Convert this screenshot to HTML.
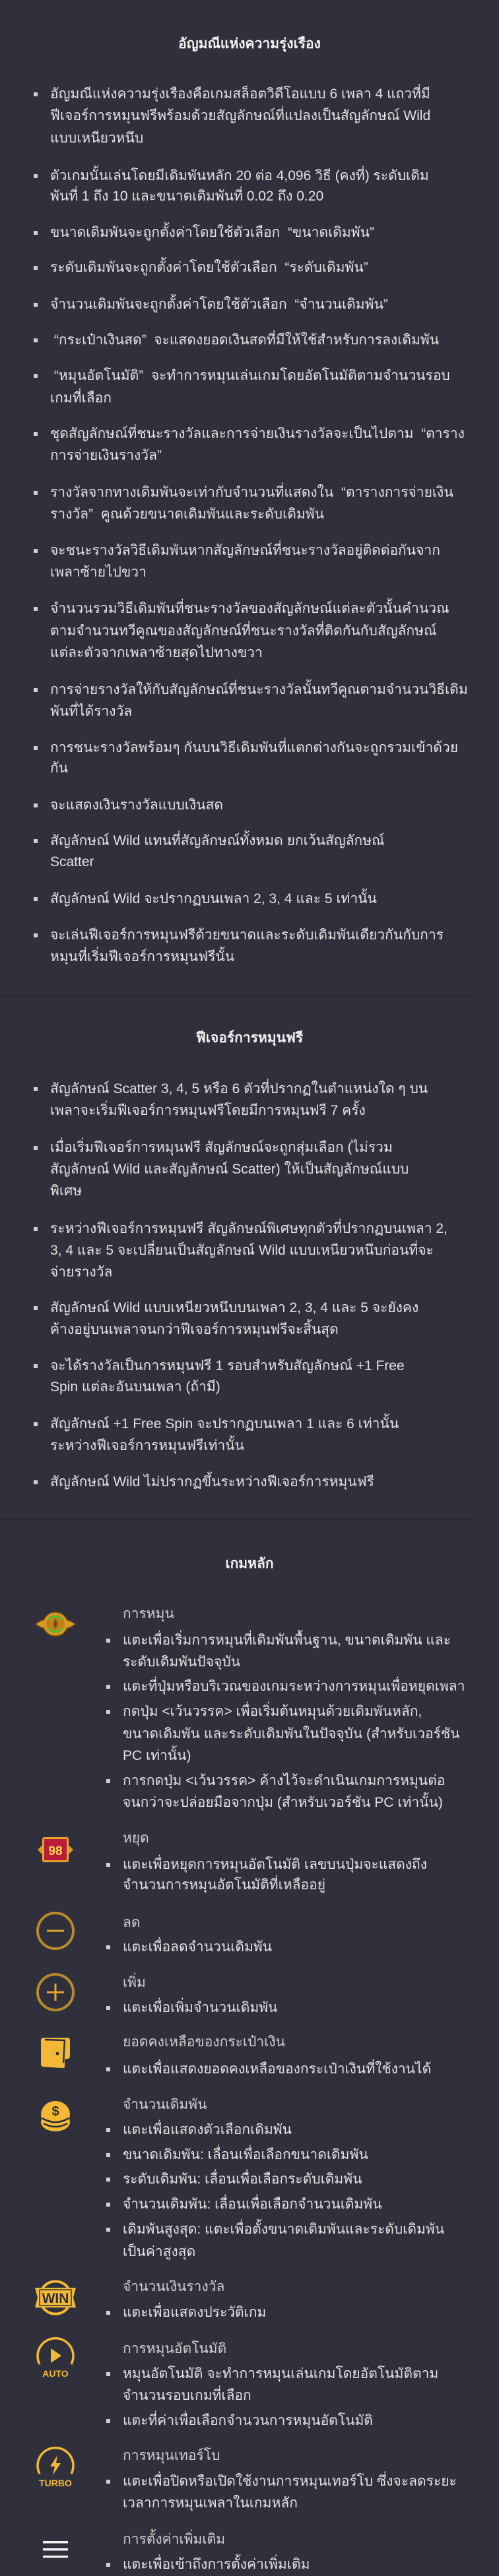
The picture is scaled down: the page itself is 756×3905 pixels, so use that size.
<!DOCTYPE html>
<html><head><meta charset="utf-8">
<style>
html,body{margin:0;padding:0;}
body{width:756px;height:3900px;background:#30303c;position:relative;overflow:hidden;font-family:"Liberation Sans","DejaVu Sans",sans-serif;}
.t{position:absolute;left:0;width:756px;text-align:center;color:#f2f2f2;font-weight:bold;font-size:21px;line-height:34px;height:34px;}
.l{position:absolute;left:76px;white-space:nowrap;color:#e2e2e2;font-size:21px;line-height:34px;height:34px;}
.s3{left:186px;}
.lab{color:#cfcfcf;}
.b::before{content:"";position:absolute;left:-25px;top:14px;width:6px;height:6px;background:#d0d0d0;}
.sep{position:absolute;left:0;width:723px;height:2px;background:#292933;}
.ic{position:absolute;}
.edge{position:absolute;right:0;top:0;width:2px;height:3900px;background:#3a3a46;}
</style></head><body>
<div class="edge"></div>

<div class="t" style="top:50px">อัญมณีแห่งความรุ่งเรือง</div>
<div class="l b" style="top:126px">อัญมณีแห่งความรุ่งเรืองคือเกมสล็อตวิดีโอแบบ 6 เพลา 4 แถวที่มี</div>
<div class="l" style="top:159px">ฟีเจอร์การหมุนฟรีพร้อมด้วยสัญลักษณ์ที่แปลงเป็นสัญลักษณ์ Wild</div>
<div class="l" style="top:193px">แบบเหนียวหนึบ</div>
<div class="l b" style="top:250px">ตัวเกมนั้นเล่นโดยมีเดิมพันหลัก 20 ต่อ 4,096 วิธี (คงที่) ระดับเดิม</div>
<div class="l" style="top:281px">พันที่ 1 ถึง 10 และขนาดเดิมพันที่ 0.02 ถึง 0.20</div>
<div class="l b" style="top:336px">ขนาดเดิมพันจะถูกตั้งค่าโดยใช้ตัวเลือก &nbsp;“ขนาดเดิมพัน”</div>
<div class="l b" style="top:389px">ระดับเดิมพันจะถูกตั้งค่าโดยใช้ตัวเลือก &nbsp;“ระดับเดิมพัน”</div>
<div class="l b" style="top:445px">จำนวนเดิมพันจะถูกตั้งค่าโดยใช้ตัวเลือก &nbsp;“จำนวนเดิมพัน”</div>
<div class="l b" style="top:499px">&nbsp;“กระเป๋าเงินสด” &nbsp;จะแสดงยอดเงินสดที่มีให้ใช้สำหรับการลงเดิมพัน</div>
<div class="l b" style="top:553px">&nbsp;“หมุนอัตโนมัติ” &nbsp;จะทำการหมุนเล่นเกมโดยอัตโนมัติตามจำนวนรอบ</div>
<div class="l" style="top:587px">เกมที่เลือก</div>
<div class="l b" style="top:641px">ชุดสัญลักษณ์ที่ชนะรางวัลและการจ่ายเงินรางวัลจะเป็นไปตาม &nbsp;“ตาราง</div>
<div class="l" style="top:674px">การจ่ายเงินรางวัล”</div>
<div class="l b" style="top:730px">รางวัลจากทางเดิมพันจะเท่ากับจำนวนที่แสดงใน &nbsp;“ตารางการจ่ายเงิน</div>
<div class="l" style="top:763px">รางวัล” &nbsp;คูณด้วยขนาดเดิมพันและระดับเดิมพัน</div>
<div class="l b" style="top:818px">จะชนะรางวัลวิธีเดิมพันหากสัญลักษณ์ที่ชนะรางวัลอยู่ติดต่อกันจาก</div>
<div class="l" style="top:851px">เพลาซ้ายไปขวา</div>
<div class="l b" style="top:906px">จำนวนรวมวิธีเดิมพันที่ชนะรางวัลของสัญลักษณ์แต่ละตัวนั้นคำนวณ</div>
<div class="l" style="top:940px">ตามจำนวนทวีคูณของสัญลักษณ์ที่ชนะรางวัลที่ติดกันกับสัญลักษณ์</div>
<div class="l" style="top:973px">แต่ละตัวจากเพลาซ้ายสุดไปทางขวา</div>
<div class="l b" style="top:1029px">การจ่ายรางวัลให้กับสัญลักษณ์ที่ชนะรางวัลนั้นทวีคูณตามจำนวนวิธีเดิม</div>
<div class="l" style="top:1062px">พันที่ได้รางวัล</div>
<div class="l b" style="top:1117px">การชนะรางวัลพร้อมๆ กันบนวิธีเดิมพันที่แตกต่างกันจะถูกรวมเข้าด้วย</div>
<div class="l" style="top:1148px">กัน</div>
<div class="l b" style="top:1204px">จะแสดงเงินรางวัลแบบเงินสด</div>
<div class="l b" style="top:1258px">สัญลักษณ์ Wild แทนที่สัญลักษณ์ทั้งหมด ยกเว้นสัญลักษณ์</div>
<div class="l" style="top:1290px">Scatter</div>
<div class="l b" style="top:1346px">สัญลักษณ์ Wild จะปรากฏบนเพลา 2, 3, 4 และ 5 เท่านั้น</div>
<div class="l b" style="top:1401px">จะเล่นฟีเจอร์การหมุนฟรีด้วยขนาดและระดับเดิมพันเดียวกันกับการ</div>
<div class="l" style="top:1434px">หมุนที่เริ่มฟีเจอร์การหมุนฟรีนั้น</div>

<div class="sep" style="top:1508px"></div>

<div class="t" style="top:1557px">ฟีเจอร์การหมุนฟรี</div>
<div class="l b" style="top:1634px">สัญลักษณ์ Scatter 3, 4, 5 หรือ 6 ตัวที่ปรากฏในตำแหน่งใด ๆ บน</div>
<div class="l" style="top:1667px">เพลาจะเริ่มฟีเจอร์การหมุนฟรีโดยมีการหมุนฟรี 7 ครั้ง</div>
<div class="l b" style="top:1723px">เมื่อเริ่มฟีเจอร์การหมุนฟรี สัญลักษณ์จะถูกสุ่มเลือก (ไม่รวม</div>
<div class="l" style="top:1756px">สัญลักษณ์ Wild และสัญลักษณ์ Scatter) ให้เป็นสัญลักษณ์แบบ</div>
<div class="l" style="top:1789px">พิเศษ</div>
<div class="l b" style="top:1846px">ระหว่างฟีเจอร์การหมุนฟรี สัญลักษณ์พิเศษทุกตัวที่ปรากฏบนเพลา 2,</div>
<div class="l" style="top:1879px">3, 4 และ 5 จะเปลี่ยนเป็นสัญลักษณ์ Wild แบบเหนียวหนึบก่อนที่จะ</div>
<div class="l" style="top:1912px">จ่ายรางวัล</div>
<div class="l b" style="top:1966px">สัญลักษณ์ Wild แบบเหนียวหนึบบนเพลา 2, 3, 4 และ 5 จะยังคง</div>
<div class="l" style="top:1999px">ค้างอยู่บนเพลาจนกว่าฟีเจอร์การหมุนฟรีจะสิ้นสุด</div>
<div class="l b" style="top:2054px">จะได้รางวัลเป็นการหมุนฟรี 1 รอบสำหรับสัญลักษณ์ +1 Free</div>
<div class="l" style="top:2086px">Spin แต่ละอันบนเพลา (ถ้ามี)</div>
<div class="l b" style="top:2142px">สัญลักษณ์ +1 Free Spin จะปรากฏบนเพลา 1 และ 6 เท่านั้น</div>
<div class="l" style="top:2175px">ระหว่างฟีเจอร์การหมุนฟรีเท่านั้น</div>
<div class="l b" style="top:2230px">สัญลักษณ์ Wild ไม่ปรากฏขึ้นระหว่างฟีเจอร์การหมุนฟรี</div>

<div class="sep" style="top:2302px"></div>

<div class="t" style="top:2354px">เกมหลัก</div>

<div class="l s3 lab" style="top:2430px">การหมุน</div>
<div class="l s3 b" style="top:2470px">แตะเพื่อเริ่มการหมุนที่เดิมพันพื้นฐาน, ขนาดเดิมพัน และ</div>
<div class="l s3" style="top:2503px">ระดับเดิมพันปัจจุบัน</div>
<div class="l s3 b" style="top:2540px">แตะที่ปุ่มหรือบริเวณของเกมระหว่างการหมุนเพื่อหยุดเพลา</div>
<div class="l s3 b" style="top:2578px">กดปุ่ม &lt;เว้นวรรค&gt; เพื่อเริ่มต้นหมุนด้วยเดิมพันหลัก,</div>
<div class="l s3" style="top:2612px">ขนาดเดิมพัน และระดับเดิมพันในปัจจุบัน (สำหรับเวอร์ชัน</div>
<div class="l s3" style="top:2645px">PC เท่านั้น)</div>
<div class="l s3 b" style="top:2683px">การกดปุ่ม &lt;เว้นวรรค&gt; ค้างไว้จะดำเนินเกมการหมุนต่อ</div>
<div class="l s3" style="top:2716px">จนกว่าจะปล่อยมือจากปุ่ม (สำหรับเวอร์ชัน PC เท่านั้น)</div>

<div class="l s3 lab" style="top:2770px">หยุด</div>
<div class="l s3 b" style="top:2810px">แตะเพื่อหยุดการหมุนอัตโนมัติ เลขบนปุ่มจะแสดงถึง</div>
<div class="l s3" style="top:2841px">จำนวนการหมุนอัตโนมัติที่เหลืออยู่</div>

<div class="l s3 lab" style="top:2898px">ลด</div>
<div class="l s3 b" style="top:2935px">แตะเพื่อลดจำนวนเดิมพัน</div>

<div class="l s3 lab" style="top:2989px">เพิ่ม</div>
<div class="l s3 b" style="top:3027px">แตะเพื่อเพิ่มจำนวนเดิมพัน</div>

<div class="l s3 lab" style="top:3079px">ยอดคงเหลือของกระเป๋าเงิน</div>
<div class="l s3 b" style="top:3120px">แตะเพื่อแสดงยอดคงเหลือของกระเป๋าเงินที่ใช้งานได้</div>

<div class="l s3 lab" style="top:3174px">จำนวนเดิมพัน</div>
<div class="l s3 b" style="top:3212px">แตะเพื่อแสดงตัวเลือกเดิมพัน</div>
<div class="l s3 b" style="top:3250px">ขนาดเดิมพัน: เลื่อนเพื่อเลือกขนาดเดิมพัน</div>
<div class="l s3 b" style="top:3287px">ระดับเดิมพัน: เลื่อนเพื่อเลือกระดับเดิมพัน</div>
<div class="l s3 b" style="top:3325px">จำนวนเดิมพัน: เลื่อนเพื่อเลือกจำนวนเดิมพัน</div>
<div class="l s3 b" style="top:3363px">เดิมพันสูงสุด: แตะเพื่อตั้งขนาดเดิมพันและระดับเดิมพัน</div>
<div class="l s3" style="top:3397px">เป็นค่าสูงสุด</div>

<div class="l s3 lab" style="top:3450px">จำนวนเงินรางวัล</div>
<div class="l s3 b" style="top:3489px">แตะเพื่อแสดงประวัติเกม</div>

<div class="l s3 lab" style="top:3544px">การหมุนอัตโนมัติ</div>
<div class="l s3 b" style="top:3582px">หมุนอัตโนมัติ จะทำการหมุนเล่นเกมโดยอัตโนมัติตาม</div>
<div class="l s3" style="top:3615px">จำนวนรอบเกมที่เลือก</div>
<div class="l s3 b" style="top:3653px">แตะที่ค่าเพื่อเลือกจำนวนการหมุนอัตโนมัติ</div>

<div class="l s3 lab" style="top:3706px">การหมุนเทอร์โบ</div>
<div class="l s3 b" style="top:3745px">แตะเพื่อปิดหรือเปิดใช้งานการหมุนเทอร์โบ ซึ่งจะลดระยะ</div>
<div class="l s3" style="top:3778px">เวลาการหมุนเพลาในเกมหลัก</div>

<div class="l s3 lab" style="top:3833px">การตั้งค่าเพิ่มเติม</div>
<div class="l s3 b" style="top:3871px">แตะเพื่อเข้าถึงการตั้งค่าเพิ่มเติม</div>

<svg class="ic" style="left:52px;top:2440px" width="64" height="44" viewBox="0 0 64 44">
<path d="M2 22 Q10 16 14 16 Q20 4 32 4 Q44 4 50 16 Q54 16 62 22 Q54 28 50 28 Q44 40 32 40 Q20 40 14 28 Q10 28 2 22Z" fill="#d99a22" stroke="#7a4a10" stroke-width="1.5"/>
<circle cx="32" cy="22" r="14" fill="#c08018"/>
<path d="M22 16 A12 12 0 0 1 42 16" fill="none" stroke="#5fb83a" stroke-width="3.5"/>
<path d="M42 28 A12 12 0 0 1 22 28" fill="none" stroke="#5fb83a" stroke-width="3.5"/>
<path d="M32 13 L35 22 L32 30 L29 22Z" fill="#7a4510"/>
</svg>
<svg class="ic" style="left:55px;top:2782px" width="58" height="44" viewBox="0 0 58 44">
<path d="M2 22 L8 16 L50 16 L56 22 L50 28 L8 28Z" fill="#d99a22"/>
<rect x="9" y="3" width="40" height="38" rx="3" fill="#e3a62a"/>
<rect x="12" y="6" width="34" height="32" fill="#b81e3c"/>
<text x="29" y="30" text-anchor="middle" font-family="Liberation Sans" font-weight="bold" font-size="19" fill="#ffd84a">98</text>
</svg>
<svg class="ic" style="left:54px;top:2897px" width="60" height="60" viewBox="0 0 60 60">
<circle cx="30" cy="30" r="27" fill="none" stroke="#b88a2a" stroke-width="4"/>
<line x1="17" y1="30" x2="43" y2="30" stroke="#e3a62a" stroke-width="3"/>
</svg>
<svg class="ic" style="left:54px;top:2990px" width="60" height="60" viewBox="0 0 60 60">
<circle cx="30" cy="30" r="27" fill="none" stroke="#b88a2a" stroke-width="4"/>
<line x1="17" y1="30" x2="43" y2="30" stroke="#e3a62a" stroke-width="3"/>
<line x1="30" y1="17" x2="30" y2="43" stroke="#e3a62a" stroke-width="3"/>
</svg>
<svg class="ic" style="left:60px;top:3087px" width="50" height="50" viewBox="0 0 50 50">
<path d="M2 6 Q2 2 6 2 L42 2 Q46 2 46 6 L46 30 Q46 34 42 34 L38 34 L38 46 Q38 48 34 48 L6 46 Q2 46 2 42Z" fill="#f3b935"/>
<path d="M8 5 L38 6 L36 40" fill="none" stroke="#30303c" stroke-width="2.5"/>
<circle cx="27" cy="26" r="2.5" fill="#30303c"/>
</svg>
<svg class="ic" style="left:61px;top:3183px" width="46" height="50" viewBox="0 0 46 50">
<ellipse cx="23" cy="22" rx="22" ry="20" fill="#f3b935"/>
<ellipse cx="23" cy="34" rx="22" ry="14" fill="#f3b935"/>
<path d="M3 28 Q23 40 43 28" fill="none" stroke="#30303c" stroke-width="2.5"/>
<path d="M5 36 Q23 46 41 36" fill="none" stroke="#30303c" stroke-width="2.5"/>
<text x="23" y="24" text-anchor="middle" font-family="Liberation Sans" font-weight="bold" font-size="20" fill="#30303c">$</text>
</svg>
<svg class="ic" style="left:52px;top:3456px" width="64" height="54" viewBox="0 0 64 54">
<path d="M12 14 A22 20 0 0 1 52 14" fill="none" stroke="#f3b935" stroke-width="4"/>
<path d="M12 40 A22 20 0 0 0 52 40" fill="none" stroke="#f3b935" stroke-width="4"/>
<path d="M1 12 L63 12 L59 27 L63 42 L1 42 L5 27Z" fill="#f3b935"/>
<rect x="8" y="15" width="48" height="24" fill="#f3b935" stroke="#30303c" stroke-width="1.5"/>
<text x="32" y="35" text-anchor="middle" font-family="Liberation Sans" font-weight="bold" font-size="21" fill="#30303c">WIN</text>
</svg>
<svg class="ic" style="left:52px;top:3542px" width="64" height="66" viewBox="0 0 64 66">
<path d="M8 42 A27 27 0 1 1 56 42" fill="none" stroke="#f3b935" stroke-width="3.5"/>
<path d="M25 18 L41 29 L25 40Z" fill="#f3b935"/>
<text x="32" y="61" text-anchor="middle" font-family="Liberation Sans" font-weight="bold" font-size="14" fill="#f3b935">AUTO</text>
</svg>
<svg class="ic" style="left:52px;top:3708px" width="64" height="66" viewBox="0 0 64 66">
<path d="M8 42 A27 27 0 1 1 56 42" fill="none" stroke="#f3b935" stroke-width="3.5"/>
<path d="M35 14 L24 31 L31 31 L28 44 L40 26 L33 26Z" fill="#f3b935"/>
<text x="32" y="61" text-anchor="middle" font-family="Liberation Sans" font-weight="bold" font-size="14" fill="#f3b935">TURBO</text>
</svg>
<svg class="ic" style="left:65px;top:3850px" width="38" height="30" viewBox="0 0 38 30">
<rect x="0" y="2" width="38" height="3.5" fill="#f2f2f2"/>
<rect x="0" y="13" width="38" height="3.5" fill="#f2f2f2"/>
<rect x="0" y="24" width="38" height="3.5" fill="#f2f2f2"/>
</svg>
</body></html>
